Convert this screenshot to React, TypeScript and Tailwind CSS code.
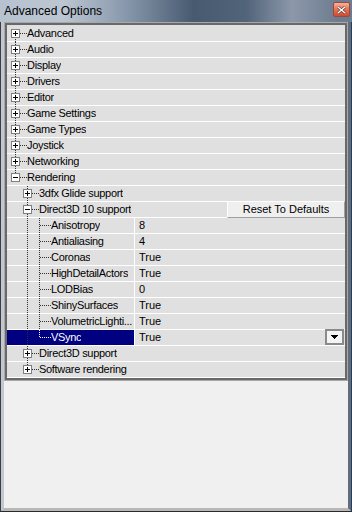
import React from 'react'

type Kind = 'closed' | 'open' | 'leaf'

interface Row {
  label: string
  depth: number
  kind: Kind
  last?: boolean
  first?: boolean
  guides: boolean[]
  value?: string
  selected?: boolean
  reset?: boolean
}

const roots = ['Advanced', 'Audio', 'Display', 'Drivers', 'Editor', 'Game Settings', 'Game Types', 'Joystick', 'Networking']

const rows: Row[] = [
  ...roots.map((label, i) => ({ label, depth: 0, kind: 'closed' as Kind, first: i === 0, guides: [] })),
  { label: 'Rendering', depth: 0, kind: 'open', last: true, guides: [] },
  { label: '3dfx Glide support', depth: 1, kind: 'closed', guides: [false] },
  { label: 'Direct3D 10 support', depth: 1, kind: 'open', guides: [false], reset: true },
  { label: 'Anisotropy', depth: 2, kind: 'leaf', guides: [false, true], value: '8' },
  { label: 'Antialiasing', depth: 2, kind: 'leaf', guides: [false, true], value: '4' },
  { label: 'Coronas', depth: 2, kind: 'leaf', guides: [false, true], value: 'True' },
  { label: 'HighDetailActors', depth: 2, kind: 'leaf', guides: [false, true], value: 'True' },
  { label: 'LODBias', depth: 2, kind: 'leaf', guides: [false, true], value: '0' },
  { label: 'ShinySurfaces', depth: 2, kind: 'leaf', guides: [false, true], value: 'True' },
  { label: 'VolumetricLighti...', depth: 2, kind: 'leaf', guides: [false, true], value: 'True' },
  { label: 'VSync', depth: 2, kind: 'leaf', last: true, guides: [false, true], value: 'True', selected: true },
  { label: 'Direct3D support', depth: 1, kind: 'closed', guides: [false] },
  { label: 'Software rendering', depth: 1, kind: 'closed', last: true, guides: [false] },
]

function Gutter({ row }: { row: Row }) {
  const w = 20 + 12 * row.depth
  const cx = 8 + 12 * row.depth
  const dot = row.selected ? '#ffffff' : '#303030'
  return (
    <svg width={w} height={15} overflow="visible" shapeRendering="crispEdges" className="shrink-0">
      {row.guides.map((on, a) =>
        on ? <line key={a} x1={8 + 12 * a + 0.5} y1={0} x2={8 + 12 * a + 0.5} y2={16} stroke="#303030" strokeDasharray="1 1" /> : null
      )}
      <line x1={cx + 0.5} y1={row.first ? 7 : 0} x2={cx + 0.5} y2={row.last ? 8 : 16} stroke={dot} strokeDasharray="1 1" />
      <line x1={cx + 1} y1={7.5} x2={cx + 12} y2={7.5} stroke={dot} strokeDasharray="1 1" />
      {row.kind !== 'leaf' && (
        <g>
          <rect x={cx - 3.5} y={3.5} width={8} height={8} fill="#ffffff" stroke="#808080" />
          <line x1={cx - 2} y1={7.5} x2={cx + 3} y2={7.5} stroke="#000" />
          {row.kind === 'closed' && <line x1={cx + 0.5} y1={5} x2={cx + 0.5} y2={10} stroke="#000" />}
        </g>
      )}
    </svg>
  )
}

function TreeRow({ row }: { row: Row }) {
  const isProp = row.value !== undefined
  return (
    <div className="flex h-[16px] border-b border-white">
      <div
        className={`flex items-center h-[15px] ${isProp ? 'w-[128px] border-r border-white' : 'flex-1'} ${
          row.selected ? 'bg-[#000080] text-white' : ''
        }`}
      >
        <Gutter row={row} />
        <span className="whitespace-nowrap overflow-hidden tracking-[-0.3px]">{row.label}</span>
        {row.reset && (
          <button className="ml-auto -mt-[1px] h-[17px] w-[118px] shrink-0 bg-[#efefef] border border-t-white border-l-white border-b-[#a0a0a0] border-r-[#a0a0a0] text-[11px] leading-[15px] text-black">
            Reset To Defaults
          </button>
        )}
      </div>
      {isProp && (
        <div className="flex-1 flex items-center h-[15px] pl-[4px]">
          <span>{row.value}</span>
          {row.selected && (
            <div className="ml-auto mr-[1px] -mt-[1px] h-[16px] w-[19px] border-2 border-[#8a8a8a] bg-[#f4f4f4] flex items-center justify-center">
              <svg width="7" height="4" shapeRendering="crispEdges">
                <path d="M0 0h7L3.5 4z" fill="#000" />
              </svg>
            </div>
          )}
        </div>
      )}
    </div>
  )
}

export default function App() {
  return (
    <div
      className="w-[352px] h-[512px] flex flex-col bg-[#4a5a70] text-black text-[11px] leading-[15px]"
      style={{ fontFamily: '"Liberation Sans", Arial, sans-serif' }}
    >
      <div className="h-[22px] shrink-0 flex items-center justify-between pl-[4px] pr-[2px] bg-[linear-gradient(to_right,#b6c2d0_0%,#bcc6d2_18%,#8797ab_36%,#485a70_55%,#52647a_70%,#8c98aa_83%,#6d7c90_96%)]">
        <span className="text-[12px] leading-[16px] text-black">Advanced Options</span>
        <div className="w-[17px] h-[15px] -mt-[3px] rounded-[2px] border border-[#9a4a38] bg-[linear-gradient(to_bottom,#f6b39c,#e6765a_45%,#cf4a2e)] flex items-center justify-center">
          <svg width="9" height="8" viewBox="0 0 9 8">
            <path d="M1 1l7 6M8 1L1 7" stroke="#5a3a36" strokeWidth="2.6" />
            <path d="M1 1l7 6M8 1L1 7" stroke="#ffffff" strokeWidth="1.4" />
          </svg>
        </div>
      </div>
      <div className="flex-1 flex flex-col border-l border-l-[#3a3f46] border-r border-r-[#2e3c4e] border-b border-b-[#2a2a2a]">
        <div className="flex-1 flex flex-col border-l-[3px] border-l-[#c4c8ce] border-r-[3px] border-r-[#5d6d82] border-b-[3px] border-b-[#b8b8b8] bg-[#f0f0f0]">
          <div className="border border-[#a8a8a8]">
            <div className="border-2 border-[#696969] bg-[#e0e0e0] pt-[1px]">
              {rows.map((r, i) => (
                <TreeRow key={i} row={r} />
              ))}
            </div>
          </div>
        </div>
      </div>
    </div>
  )
}
